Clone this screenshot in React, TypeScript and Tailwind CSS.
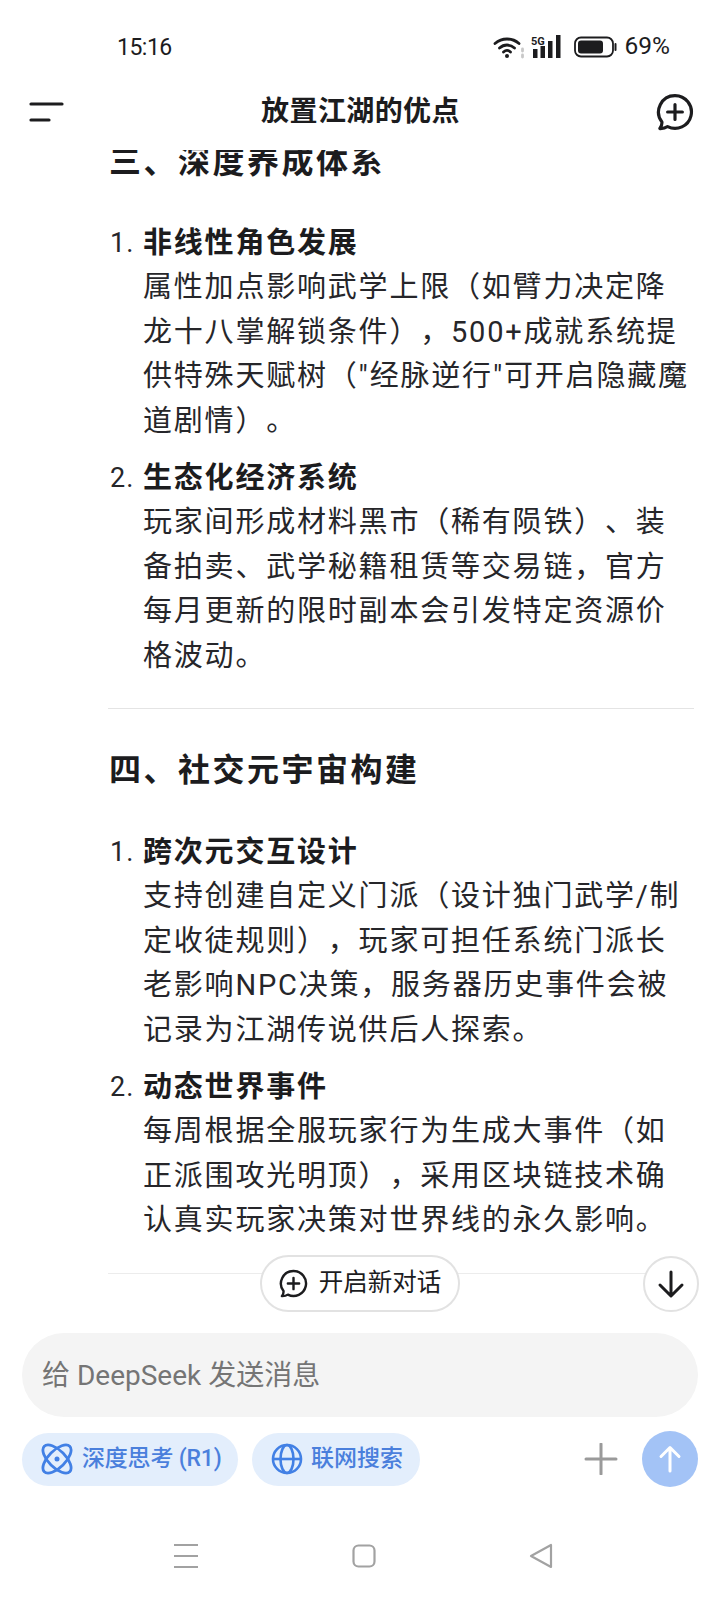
const fontStack = "font-['Roboto','Noto_Sans_CJK_SC',sans-serif] [text-spacing-trim:space-all]"

type Item = { num: string; title: string; lines: string[] }

const sectionThree: Item[] = [
  {
    num: "1.",
    title: "非线性角色发展",
    lines: ["属性加点影响武学上限（如臂力决定降", "龙十八掌解锁条件），500+成就系统提", "供特殊天赋树（\"经脉逆行\"可开启隐藏魔", "道剧情）。"],
  },
  {
    num: "2.",
    title: "生态化经济系统",
    lines: ["玩家间形成材料黑市（稀有陨铁）、装", "备拍卖、武学秘籍租赁等交易链，官方", "每月更新的限时副本会引发特定资源价", "格波动。"],
  },
]

const sectionFour: Item[] = [
  {
    num: "1.",
    title: "跨次元交互设计",
    lines: ["支持创建自定义门派（设计独门武学/制", "定收徒规则），玩家可担任系统门派长", "老影响NPC决策，服务器历史事件会被", "记录为江湖传说供后人探索。"],
  },
  {
    num: "2.",
    title: "动态世界事件",
    lines: ["每周根据全服玩家行为生成大事件（如", "正派围攻光明顶），采用区块链技术确", "认真实玩家决策对世界线的永久影响。"],
  },
]

function ChatPlus({ size, stroke }: { size: number; stroke: number }) {
  return (
    <svg width={size} height={size} viewBox="0 0 36 36" fill="none" stroke="#1c1c1e" strokeWidth={stroke}>
      <path d="M18 2.5a15.5 15.5 0 1 1-7 29.3c-2 1.4-4.6 2-7.4 1.9 1.6-2 2.2-3.900 2-6.300A15.500 15.500 0 0 1 18 2.500z" strokeLinejoin="round" />
      <path d="M18 11v14M11 18h14" strokeLinecap="round" />
    </svg>
  )
}

function QAItem({ item }: { item: Item }) {
  return (
    <div className="flex">
      <div className="w-[35px] text-[27px] text-[#26262a] leading-[44px] tracking-[1px] pl-[2px]">{item.num}</div>
      <div>
        <div className="text-[29px] font-bold text-[#1c1c1e] leading-[44px] tracking-[1.8px] whitespace-nowrap">{item.title}</div>
        {item.lines.map((line) => (
          <div key={line} className="text-[29px] text-[#26262a] leading-[44.5px] tracking-[1.8px] whitespace-nowrap">
            {line}
          </div>
        ))}
      </div>
    </div>
  )
}

export default function App() {
  return (
    <div className={`${fontStack} w-[720px] h-[1600px] bg-white flex flex-col relative overflow-hidden`}>
      {/* status bar */}
      <div className="h-[82px] shrink-0 flex items-center pl-[117px] pr-[50px] pt-[11px] text-[#1c1c1e]">
        <span className="text-[23px] tracking-[-0.5px] mt-[3px]">15:16</span>
        <div className="ml-auto flex items-center">
          <svg width="32" height="24" viewBox="0 0 32 24" fill="none" stroke="#1c1c1e" strokeWidth="2.800" strokeLinecap="round">
            <path d="M2 8.500c7-6 17-6 24 0M6.500 13c4.500-4 10.500-4 15 0M10.500 17c2.200-2 4.800-2 7 0" />
            <circle cx="14" cy="21" r="2" fill="#1c1c1e" stroke="none" />
            <path d="M29.500 14v2M29.500 20v2" stroke="#c8c8c8" />
          </svg>
          <svg className="ml-[6px]" width="32" height="26" viewBox="0 0 32 26" fill="#1c1c1e">
            <rect x="2" y="15" width="4.500" height="9" />
            <rect x="9.500" y="12" width="4.500" height="12" />
            <rect x="17" y="7" width="4.500" height="17" />
            <rect x="25" y="1" width="4.500" height="23" />
            <text x="0" y="11" fontSize="11" fontWeight="700" fontFamily="Roboto">5G</text>
          </svg>
          <svg className="ml-[11px]" width="44" height="22" viewBox="0 0 44 22" fill="none">
            <rect x="1" y="1.500" width="38" height="19" rx="6" stroke="#1c1c1e" strokeWidth="1.800" />
            <rect x="4" y="4.500" width="25" height="13" rx="3" fill="#1c1c1e" />
            <path d="M41.500 8v6" stroke="#1c1c1e" strokeWidth="2" strokeLinecap="round" />
          </svg>
          <span className="ml-[7px] text-[24.500px]">69%</span>
        </div>
      </div>

      {/* header */}
      <div className="h-[68px] shrink-0 flex items-center justify-between pl-[29px] pr-[26px] pb-[8px]">
        <svg width="36" height="22" viewBox="0 0 36 22" stroke="#1c1c1e" strokeWidth="3.200" strokeLinecap="round">
          <path d="M2 3h31M2 19h18" />
        </svg>
        <span className="text-[28px] font-bold text-[#1c1c1e] tracking-[0.4px]">放置江湖的优点</span>
        <ChatPlus size={38} stroke={3} />
      </div>

      {/* scrolled answer */}
      <div className="flex-1 overflow-hidden relative">
        <div className="mt-[-10px] pl-[109px] pr-[26px]">
          <h2 className="text-[32px] font-bold text-[#1c1c1e] leading-[45px] tracking-[2.500px]">三、深度养成体系</h2>
          <div className="mt-[36px] ml-[-1px] flex flex-col gap-[13px]">
            {sectionThree.map((item) => (
              <QAItem key={item.title} item={item} />
            ))}
          </div>
          <div className="h-[1px] bg-[#e4e4e4] mt-[30px] ml-[-1px]" />
          <h2 className="mt-[39px] text-[32px] font-bold text-[#1c1c1e] leading-[45px] tracking-[2.500px]">四、社交元宇宙构建</h2>
          <div className="mt-[37px] ml-[-1px] flex flex-col gap-[13px]">
            {sectionFour.map((item) => (
              <QAItem key={item.title} item={item} />
            ))}
          </div>
          <div className="h-[1px] bg-[#ececec] mt-[30px] ml-[-1px]" />
        </div>

        <div className="absolute left-[260px] bottom-[21px] w-[200px] h-[57px] rounded-full border-2 border-[#e2e2e2] bg-white flex items-center justify-center gap-[11px] text-[24.500px] text-[#1c1c1e]">
          <ChatPlus size={29} stroke={3} />
          开启新对话
        </div>
        <div className="absolute left-[643px] bottom-[21px] w-[56px] h-[56px] rounded-full border-2 border-[#e2e2e2] bg-white flex items-center justify-center">
          <svg width="28" height="30" viewBox="0 0 28 30" fill="none" stroke="#1c1c1e" strokeWidth="3" strokeLinecap="round" strokeLinejoin="round">
            <path d="M14 3v23M3 16l11 11 11-11" />
          </svg>
        </div>
      </div>

      {/* composer */}
      <div className="shrink-0 px-[22px]">
        <div className="h-[84px] rounded-[42px] bg-[#f4f4f4] flex items-center px-[20px] pt-[1px] text-[28px] text-[#757575]">给 DeepSeek 发送消息</div>
        <div className="mt-[14px] flex items-center">
          <div className="h-[53px] w-[216px] rounded-full bg-[#e3eefc] flex items-center pl-[19px] gap-[9px] text-[23px] tracking-[-0.2px] font-medium text-[#4a7fdc]">
            <svg width="32" height="32" viewBox="0 0 32 32" fill="none" stroke="#4280e5" strokeWidth="2.800">
              <ellipse cx="16" cy="16" rx="8.500" ry="18" transform="rotate(-45 16 16)" />
              <ellipse cx="16" cy="16" rx="8.500" ry="18" transform="rotate(45 16 16)" />
              <circle cx="16" cy="16" r="2.500" fill="#4280e5" stroke="none" />
            </svg>
            深度思考 (R1)
          </div>
          <div className="ml-[14px] h-[53px] w-[168px] rounded-full bg-[#e3eefc] flex items-center pl-[19px] gap-[8px] text-[23px] font-medium text-[#4a7fdc]">
            <svg width="32" height="32" viewBox="0 0 32 32" fill="none" stroke="#4280e5" strokeWidth="2.600">
              <circle cx="16" cy="16" r="14" />
              <ellipse cx="16" cy="16" rx="6.500" ry="14" />
              <path d="M2 16h28" />
            </svg>
            联网搜索
          </div>
          <svg className="ml-auto" width="34" height="32" viewBox="0 0 34 32" stroke="#9a9a9a" strokeWidth="3" strokeLinecap="round">
            <path d="M2 16h30M17 1v30" />
          </svg>
          <div className="ml-[24px] w-[56px] h-[56px] rounded-full bg-[#a3c3f6] flex items-center justify-center">
            <svg width="24" height="28" viewBox="0 0 24 28" fill="none" stroke="#fff" strokeWidth="3" strokeLinecap="round" strokeLinejoin="round">
              <path d="M12 26V3M3 11.500L12 2.500l9 9" />
            </svg>
          </div>
        </div>
      </div>

      {/* nav bar */}
      <div className="h-[113px] shrink-0 flex items-center pt-[25px]">
        <svg className="ml-[174px]" width="24" height="26" viewBox="0 0 24 26" stroke="#a2a2a2" strokeWidth="2.200">
          <path d="M0 2h24M0 13h24M0 24h24" />
        </svg>
        <svg className="ml-[154px]" width="24" height="24" viewBox="0 0 24 24" fill="none" stroke="#a2a2a2" strokeWidth="2.200">
          <rect x="1.500" y="1.500" width="21" height="21" rx="5" />
        </svg>
        <svg className="ml-[153px]" width="24" height="26" viewBox="0 0 24 26" fill="none" stroke="#a2a2a2" strokeWidth="2.200" strokeLinejoin="round">
          <path d="M22 2v22L2 13z" />
        </svg>
      </div>
    </div>
  )
}
